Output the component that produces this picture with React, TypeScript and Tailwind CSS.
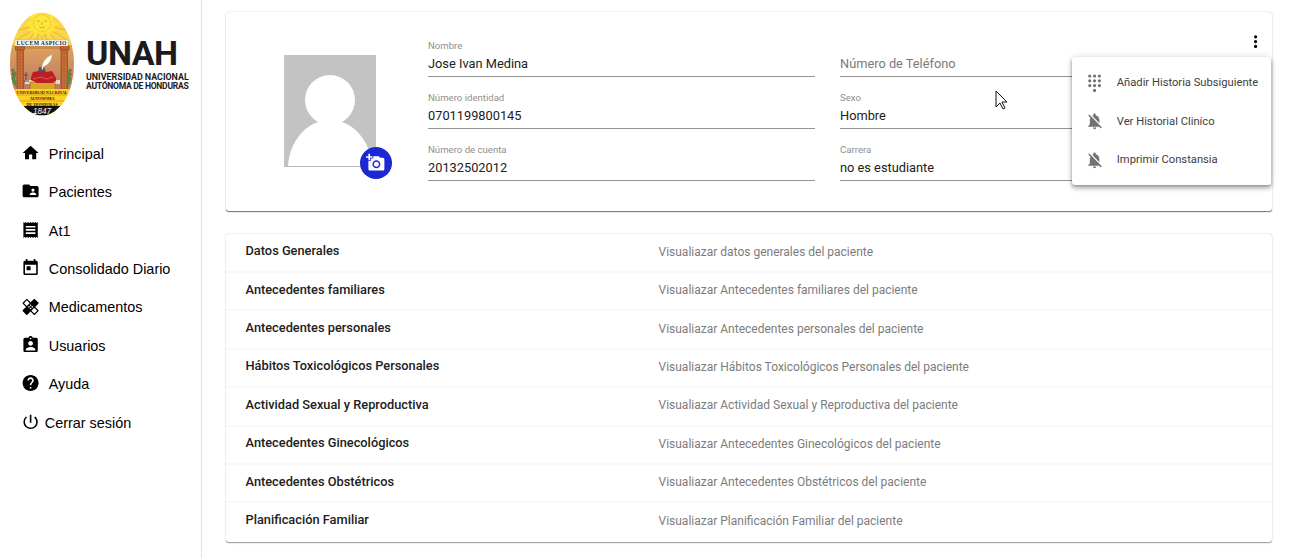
import {
  MdAddAPhoto, MdAssignmentInd, MdDialpad, MdHealing, MdHelp, MdHome,
  MdMoreVert, MdPowerSettingsNew,
} from "react-icons/md";
import type { ComponentType } from "react";

type Icon = ComponentType<{ className?: string }>;

const glyph = (d: string): Icon =>
  function Glyph({ className }) {
    return (
      <svg viewBox="0 0 24 24" fill="currentColor" className={className}>
        <path d={d} />
      </svg>
    );
  };

const FolderShared = glyph("M20 6h-8l-2-2H4c-1.1 0-1.99.9-1.99 2L2 18c0 1.1.9 2 2 2h16c1.1 0 2-.9 2-2V8c0-1.1-.9-2-2-2zm-5 3c1.1 0 2 .9 2 2s-.9 2-2 2-2-.9-2-2 .9-2 2-2zm4 8h-8v-1c0-1.33 2.67-2 4-2s4 .67 4 2v1z");
const Receipt = glyph("M18 17H6v-2h12v2zm0-4H6v-2h12v2zm0-4H6V7h12v2zM3 22l1.5-1.5L6 22l1.5-1.5L9 22l1.5-1.5L12 22l1.5-1.5L15 22l1.5-1.5L18 22l1.5-1.5L21 22V2l-1.5 1.5L18 2l-1.5 1.5L15 2l-1.5 1.5L12 2l-1.5 1.5L9 2 7.5 3.5 6 2 4.5 3.5 3 2v20z");
const Today = glyph("M19 3h-1V1h-2v2H8V1H6v2H5c-1.11 0-1.99.9-1.99 2L3 19c0 1.1.89 2 2 2h14c1.1 0 2-.9 2-2V5c0-1.1-.9-2-2-2zm0 16H5V8h14v11zM7 10h5v5H7z");
const BellOff = glyph("M20 18.69L7.84 6.14 5.27 3.49 4 4.76l2.8 2.8v.01c-.52.99-.8 2.16-.8 3.42v5l-2 2v1h13.73l2 2L21 19.72l-1-1.03zM12 22c1.11 0 2-.89 2-2h-4c0 1.11.89 2 2 2zm6-7.32V11c0-3.08-1.64-5.64-4.5-6.32V4c0-.83-.67-1.5-1.5-1.5s-1.5.67-1.5 1.5v.68c-.15.03-.29.08-.42.12-.1.03-.2.07-.3.11h-.01c-.01 0-.01 0-.02.01-.23.09-.46.2-.68.31 0 0-.01 0-.01.01L18 14.68z");

const NAV: { label: string; icon: Icon; tight?: boolean }[] = [
  { label: "Principal", icon: MdHome },
  { label: "Pacientes", icon: FolderShared },
  { label: "At1", icon: Receipt },
  { label: "Consolidado Diario", icon: Today },
  { label: "Medicamentos", icon: MdHealing },
  { label: "Usuarios", icon: MdAssignmentInd },
  { label: "Ayuda", icon: MdHelp },
  { label: "Cerrar sesión", icon: MdPowerSettingsNew, tight: true },
];

const FIELDS: { label: string; value: string }[] = [
  { label: "Nombre", value: "Jose Ivan Medina" },
  { label: "Número de Teléfono", value: "" },
  { label: "Número identidad", value: "0701199800145" },
  { label: "Sexo", value: "Hombre" },
  { label: "Número de cuenta", value: "20132502012" },
  { label: "Carrera", value: "no es estudiante" },
];

const PANELS: [string, string][] = [
  ["Datos Generales", "Visualiazar datos generales del paciente"],
  ["Antecedentes familiares", "Visualiazar Antecedentes familiares del paciente"],
  ["Antecedentes personales", "Visualiazar Antecedentes personales del paciente"],
  ["Hábitos Toxicológicos Personales", "Visualiazar Hábitos Toxicológicos Personales del paciente"],
  ["Actividad Sexual y Reproductiva", "Visualiazar Actividad Sexual y Reproductiva del paciente"],
  ["Antecedentes Ginecológicos", "Visualiazar Antecedentes Ginecológicos del paciente"],
  ["Antecedentes Obstétricos", "Visualiazar Antecedentes Obstétricos del paciente"],
  ["Planificación Familiar", "Visualiazar Planificación Familiar del paciente"],
];

const MENU: [string, Icon][] = [
  ["Añadir Historia Subsiguiente", MdDialpad],
  ["Ver Historial Cliníco", BellOff],
  ["Imprimir Constansia", BellOff],
];

function Seal() {
  return (
    <svg width="66" height="105" viewBox="0 0 66 105" className="shrink-0">
      <defs>
        <clipPath id="oval"><ellipse cx="33" cy="52" rx="32" ry="51.3" /></clipPath>
        <linearGradient id="wall" x1="0" y1="0" x2="0" y2="1">
          <stop offset="0" stopColor="#dfa35c" />
          <stop offset="1" stopColor="#bd7468" />
        </linearGradient>
      </defs>
      <g clipPath="url(#oval)">
        <rect width="66" height="105" fill="#fad546" />
        <g stroke="#e5b23e" strokeWidth="1">
          <path d="M33 12 2 20M33 12 8 28M33 12 18 30M33 12 27 30M33 12 33 30M33 12 38 30M33 12 48 30M33 12 58 28M33 12 64 20" />
        </g>
        <path d="m33 24-3-3-5 4-1-6-6 1 3-5-5-3 6-3-2-9h26l-2 9 6 3-5 3 3 5-6-1-1 6-5-4z" fill="#ffe33a" />
        <circle cx="33" cy="11" r="8.5" fill="#ffe63a" stroke="#e0b03a" strokeWidth=".5" />
        <path d="M28 9h3M35 9h3M33 10v3M30 15q3 2 6 0" stroke="#c79a30" strokeWidth=".8" fill="none" />
        <rect y="33" width="66" height="46" fill="url(#wall)" />
        <path d="M6 34h54v3H6z" fill="#c98a45" />
        <g fill="#b8642c" stroke="#8f4324" strokeWidth=".6">
          <rect x="8" y="37" width="6.5" height="41" />
          <rect x="52" y="37" width="6.5" height="41" />
          <rect x="6.5" y="34" width="9" height="4" />
          <rect x="51" y="34" width="9" height="4" />
        </g>
        <path d="M10 39v37M12.5 39v37M54 39v37M56.5 39v37" stroke="#e08a3f" strokeWidth=".6" strokeDasharray="2 1" />
        <path d="m3 57 3 5-2 5 3 6M62 57l-3 5 2 5-3 6" stroke="#518c48" strokeWidth="3" fill="none" />
        <circle cx="4" cy="62" r="1.2" fill="#dc352b" />
        <circle cx="61.5" cy="62" r="1.2" fill="#dc352b" />
        <path d="M16 68h35v4H16z" fill="#e3d9c4" />
        <path d="M21 70h25v9H21z" fill="#d8a529" stroke="#93671d" strokeWidth=".6" />
        <path d="m24 60 6-1 7 1 6-1 4 7v3l-4 2H28l-6-3v-3z" fill="#ba1f23" />
        <path d="m24 67 8-2 5 2 7-2" stroke="#ef5349" fill="none" />
        <path d="M30 55h5l2 5h-8z" fill="#4c5467" />
        <path d="M32.5 57q0-10 11-15-.5 9-9 13l-1 3" fill="#fffbe8" stroke="#a29073" strokeWidth=".5" />
        <path d="M17 60v8M15 63h4M15 69h5" stroke="#6f4550" fill="none" />
        <rect y="77" width="66" height="18" fill="#ffcf22" />
        <path d="M0 83h66M0 89h66" stroke="#be8d25" strokeWidth=".6" />
        <rect y="94" width="66" height="11" fill="#111" />
      </g>
      <rect x="6" y="28" width="53" height="6" fill="#fff" stroke="#b8a98b" strokeWidth=".5" />
      <g textAnchor="middle" fontFamily="Liberation Serif, serif" fontWeight="700" fill="#222">
        <text x="32.5" y="33" fontSize="5.7" textLength="50">LUCEM ASPICIO</text>
        <text x="33" y="82.3" fontSize="4.7" textLength="51" lengthAdjust="spacingAndGlyphs">UNIVERSIDAD NACIONAL</text>
        <text x="33" y="88.4" fontSize="4.5" textLength="25">AUTONOMA</text>
        <text x="33" y="94" fontSize="4.5" textLength="31" lengthAdjust="spacingAndGlyphs">DE HONDURAS</text>
      </g>
      <text x="33" y="101.5" textAnchor="middle" fontFamily="Liberation Sans, sans-serif" fontSize="8.2" fontStyle="italic" fill="#fff">1847</text>
    </svg>
  );
}

export default function App() {
  return (
    <div className="flex h-[558px] w-full overflow-hidden bg-white font-['Roboto',sans-serif]">
      <aside className="w-[202px] shrink-0 border-r border-[#e0e0e0]">
        <div className="flex h-[135.5px] pt-3 pl-[9px]">
          <Seal />
          <div className="ml-[11px] w-[104px] pt-[24px] text-[#1b1b1e]">
            <div className="text-[34px] leading-[34px] font-bold tracking-[-0.5px]">UNAH</div>
            <div className="mt-[3px] text-[8.9px] leading-[9px] font-bold whitespace-nowrap">
              <div>UNIVERSIDAD NACIONAL</div>
              <div className="text-[8.6px] tracking-[-0.3px]">AUTÓNOMA DE HONDURAS</div>
            </div>
          </div>
        </div>
        <nav className="font-['Liberation_Sans',sans-serif] text-[14.4px] text-black">
          {NAV.map(({ label, icon: Icon, tight }) => (
            <a key={label} className={`flex h-[38.4px] items-center pl-[20.8px] ${tight ? "gap-[4.8px]" : "gap-[8.8px]"}`}>
              <Icon className="size-[19.2px] -translate-y-[1.7px]" />
              <span>{label}</span>
            </a>
          ))}
        </nav>
      </aside>

      <main className="flex-1 pt-3 pl-6">
        <section className="relative flex h-[199px] w-[1046px] rounded-[3px] bg-white shadow-[0_1.6px_0.8px_-0.8px_rgba(0,0,0,.4),0_0.8px_0.8px_rgba(0,0,0,.14),0_0.8px_2.4px_rgba(0,0,0,.12)]">
          <div className="relative mt-[43px] ml-[58px] h-28 w-[92px] shrink-0">
            <svg viewBox="0 0 92 112" className="h-28 w-[92px]">
              <rect width="92" height="112" fill="#c3c3c3" />
              <circle cx="46" cy="45" r="25" fill="#fff" />
              <path d="M4 111C5 91 17 73 34 67h24c17 6 29 24 30 44z" fill="#fff" />
              <path d="M0 111.5h92" stroke="#b9b9b9" />
            </svg>
            <button className="absolute top-[92px] left-[76px] flex size-8 items-center justify-center rounded-full bg-[#1b28d3] text-white">
              <MdAddAPhoto className="size-[19.2px]" />
            </button>
          </div>
          <div className="mt-[26px] ml-[52px] grid w-[799px] grid-cols-2 content-start gap-x-[25px]">
            {FIELDS.map(({ label, value }) => (
              <div key={label} className="mb-[13px] flex h-[39px] flex-col border-b border-[#949494]">
                <span className="h-[15px] text-[9.6px] leading-[15px] text-[#8f8f8f]">{value ? label : ""}</span>
                <span className={`mt-[3px] text-[12.8px] leading-[16px] ${value ? "text-[#212121]" : "text-[#7b7b7b]"}`}>{value || label}</span>
              </div>
            ))}
          </div>
          <MdMoreVert className="absolute top-[20px] left-[1019.5px] size-[19.2px] text-black" />
          <svg width="13" height="21" viewBox="0 0 13 21" className="absolute top-[78px] left-[769px]">
            <path d="M1 1v16l4-4 3 6 2-1-3-6h5z" fill="#fff" stroke="#111" />
          </svg>
          <div className="absolute top-[45px] left-[846px] h-32 w-[199px] rounded-[3px] bg-white py-[6.4px] shadow-[0_1.6px_3.2px_-0.8px_rgba(0,0,0,.3),0_3.2px_4px_rgba(0,0,0,.18),0_0.8px_8px_rgba(0,0,0,.12)]">
            {MENU.map(([label, Icon]) => (
              <div key={label} className="flex h-[38.4px] items-center gap-[12.8px] pl-[12.8px] text-[11.2px] text-[#404040]">
                <Icon className="size-[19.2px] translate-y-[0.6px] text-[#737373]" />
                <span className="translate-y-px whitespace-nowrap">{label}</span>
              </div>
            ))}
          </div>
        </section>

        <section className="mt-[23px] h-[308px] w-[1046px] rounded-[3px] pt-[0.7px] shadow-[0_1.6px_0.8px_-0.8px_rgba(0,0,0,.2),0_0.8px_0.8px_rgba(0,0,0,.14),0_0.8px_2.4px_rgba(0,0,0,.14)]">
          {PANELS.map(([title, text], i) => (
            <div key={title} className={`flex h-[38.4px] items-center border-b-2 pl-[19.5px] ${i < PANELS.length - 1 ? "border-[#f8f8f8]" : "border-transparent"}`}>
              <span className="w-[413px] -translate-y-[2.1px] text-[12.8px] font-medium text-[#212121]">{title}</span>
              <span className="-translate-y-[0.7px] text-[12px] text-[#7c7c7c]">{text}</span>
            </div>
          ))}
        </section>
      </main>
    </div>
  );
}
